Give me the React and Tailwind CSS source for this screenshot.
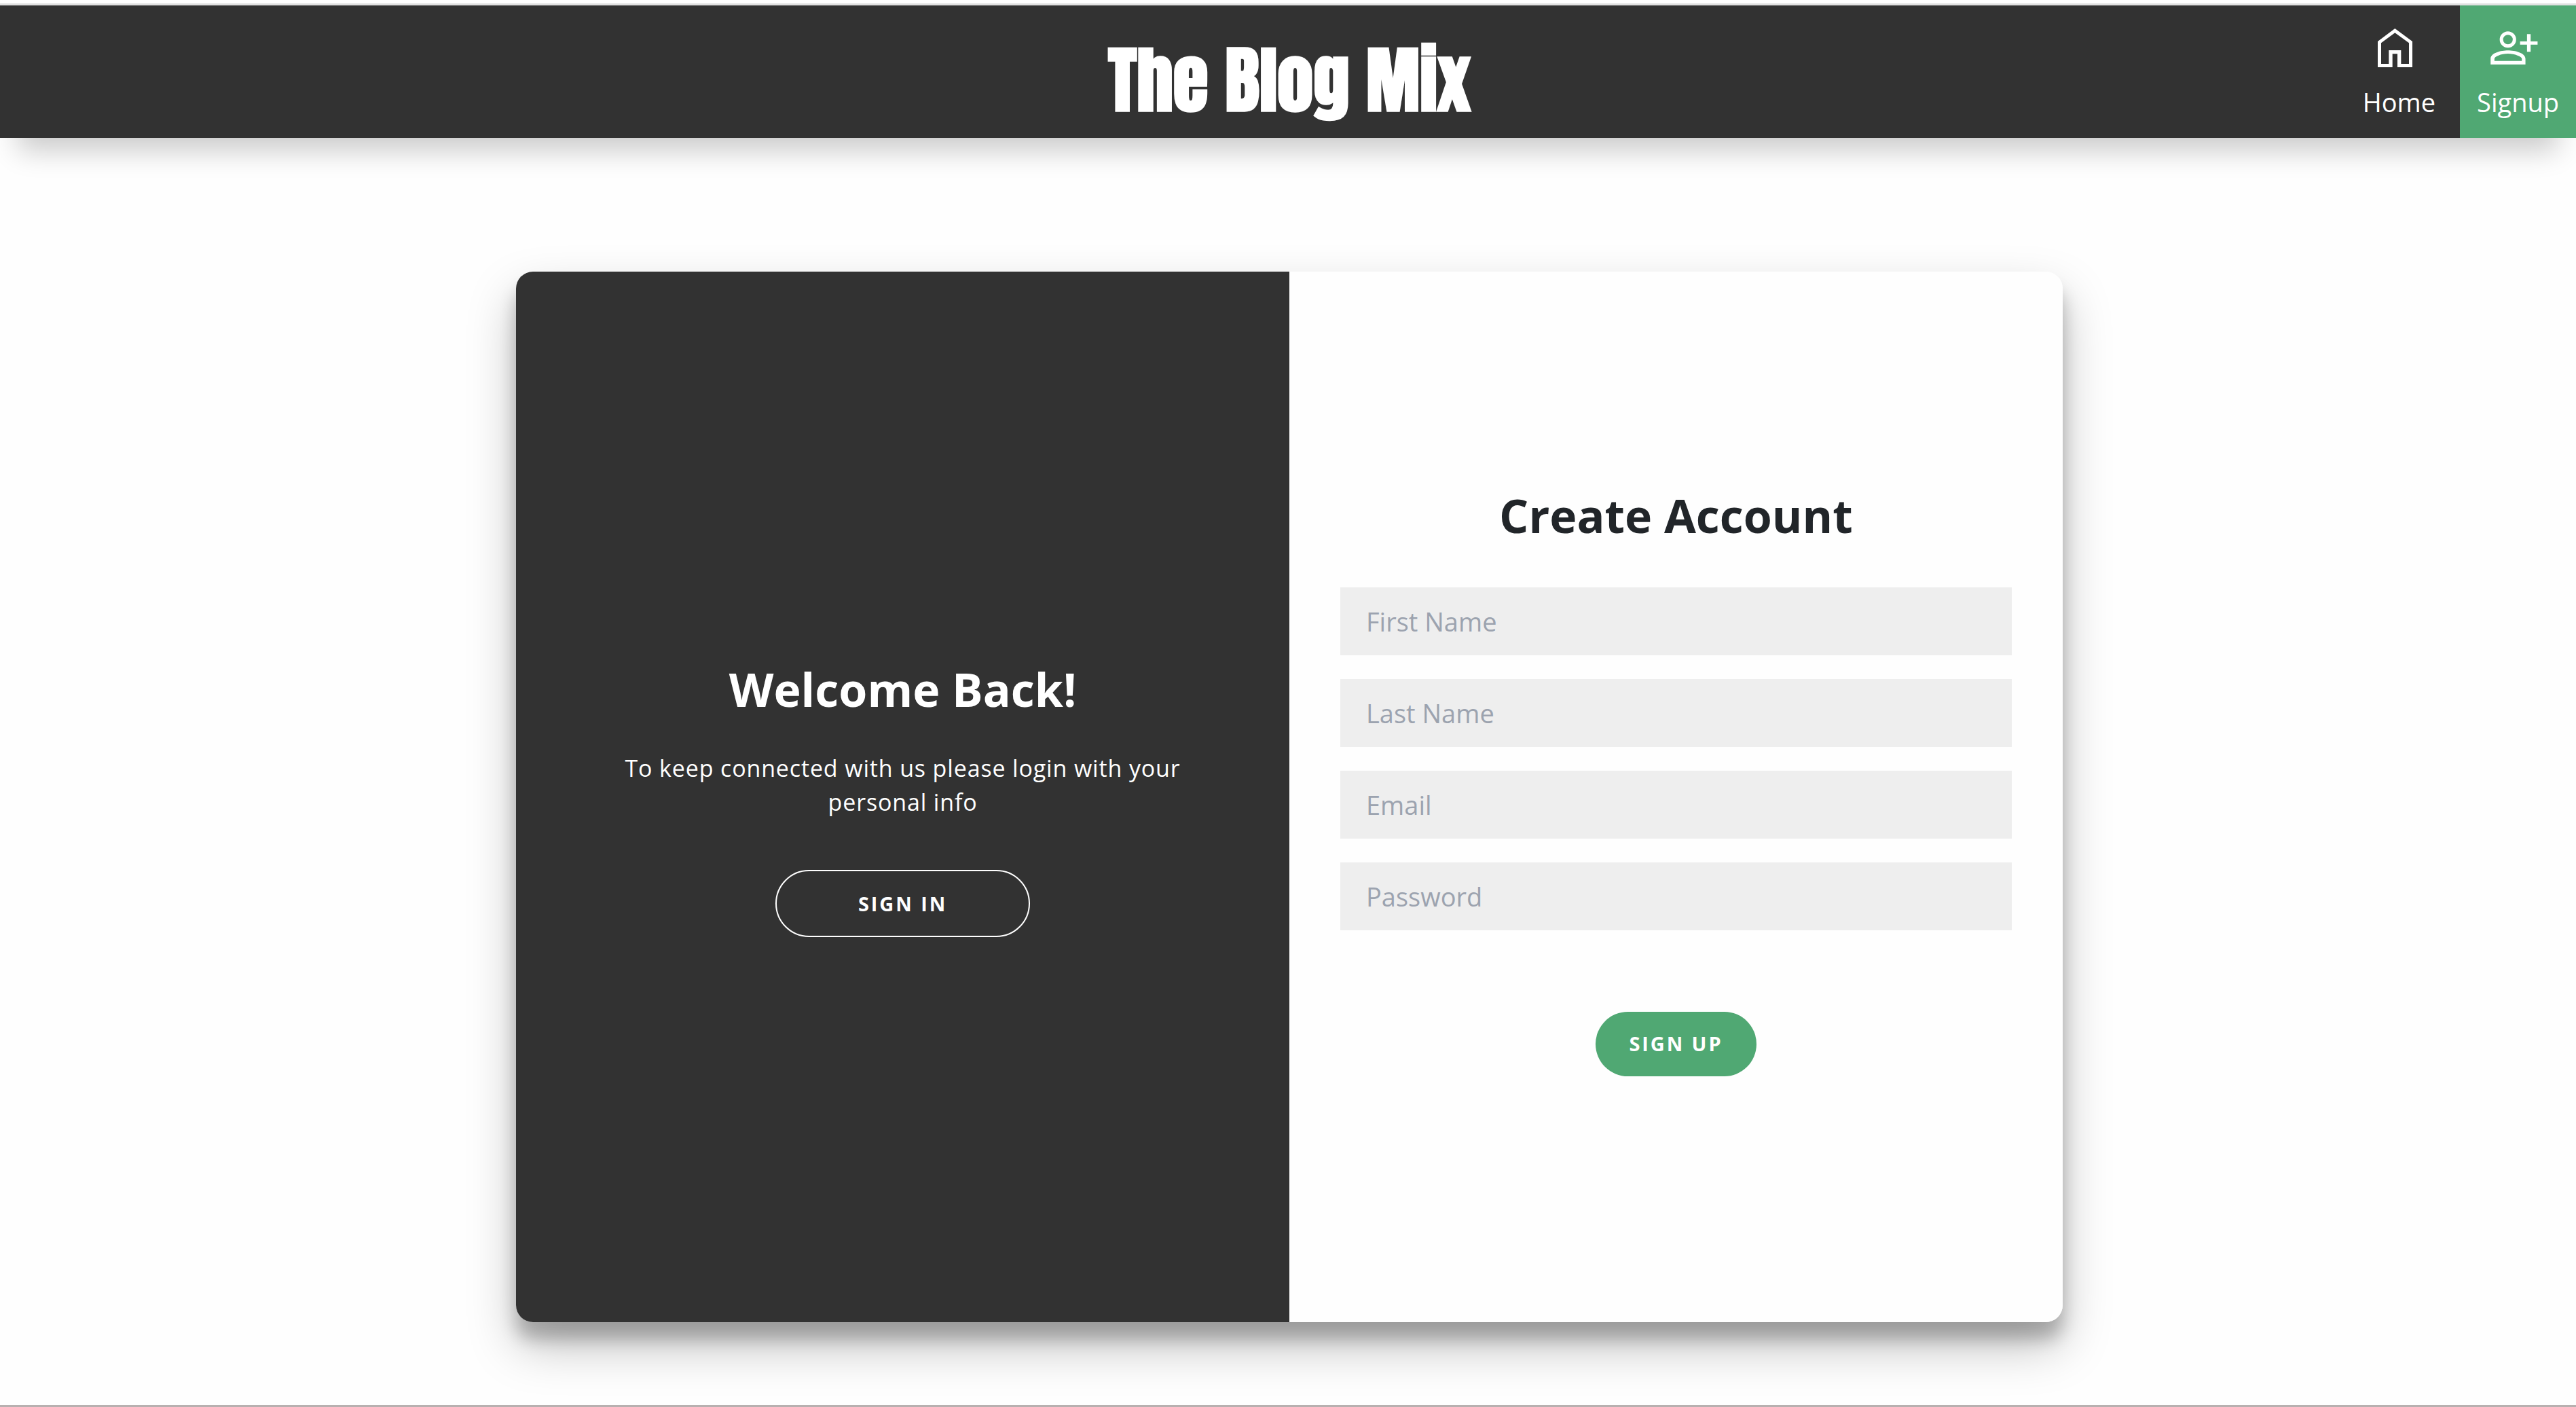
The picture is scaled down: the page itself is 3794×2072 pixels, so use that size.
import React from "react";

const fields = [
  { id: "first-name", label: "First Name", type: "text" },
  { id: "last-name", label: "Last Name", type: "text" },
  { id: "email", label: "Email", type: "email" },
  { id: "password", label: "Password", type: "password" },
];

function HomeIcon() {
  return (
    <svg viewBox="252 126 153 171" className="mr-3 h-[57px] w-[51px]" fill="currentColor" aria-hidden="true">
      <path
        fillRule="evenodd"
        d="M252 183 328 126 405 183V297H339V238H317V297H252ZM267 190V282H301V222H355V282H390V190L328 145Z"
      />
    </svg>
  );
}

function SignupIcon() {
  return (
    <svg viewBox="748 140 210 148" className="mr-3 h-[49px] w-[70px]" fill="currentColor" aria-hidden="true">
      <circle cx="825" cy="177" r="29" fill="none" stroke="currentColor" strokeWidth="15" />
      <path
        fillRule="evenodd"
        d="M748 288V262C748 236 794 225 825 225S903 236 903 262V288ZM765 272H887V262C887 254 856 240 825 240S765 254 765 262Z"
      />
      <path d="M910 153H926V185H957V200H926V231H910V200H879V185H910Z" />
    </svg>
  );
}

function Header() {
  return (
    <header className="relative grid grid-cols-[1fr_auto_1fr] bg-[#323232] pl-1 text-white shadow-[0_45px_38px_-26px_rgba(0,0,0,0.2)]">
      <h1 className="col-start-2 self-center pt-6 font-['Impact','Anton','Roboto_Condensed','Roboto',sans-serif] text-[106px] leading-[120px] font-black">
        The Blog Mix
      </h1>
      <nav className="flex justify-end text-[38px] leading-[54px]">
        <a href="#home" className="flex flex-col items-center px-9 pt-[34px] pb-[26px]">
          <HomeIcon />
          <span className="mt-auto">Home</span>
        </a>
        <a href="#signup" className="flex h-[195px] flex-col items-center bg-[#50a873] px-[25px] pt-[38px] pb-[26px]">
          <SignupIcon />
          <span className="mt-auto">Signup</span>
        </a>
      </nav>
    </header>
  );
}

function WelcomePanel() {
  return (
    <section className="flex w-1/2 flex-col items-center justify-center bg-[#323232] px-[100px] pt-1 text-center text-white">
      <h2 className="text-[68px] leading-[88px] font-bold">Welcome Back!</h2>
      <p className="mt-[47px] max-w-[880px] text-[34px] leading-[50px] tracking-wide">
        To keep connected with us please login with your personal info
      </p>
      <button
        type="button"
        className="mt-[75px] h-[99px] w-[375px] rounded-full border-2 border-white text-[29px] font-bold tracking-widest"
      >
        SIGN IN
      </button>
    </section>
  );
}

function SignupForm() {
  return (
    <form className="flex w-1/2 flex-col items-center justify-center bg-[#fefefe] px-[75px] pb-12">
      <h2 className="text-[68px] leading-[88px] font-bold text-[#212529]">Create Account</h2>
      <div className="mt-[62px] flex w-full flex-col gap-[35px]">
        {fields.map((f) => (
          <input
            key={f.id}
            id={f.id}
            type={f.type}
            aria-label={f.label}
            placeholder={f.label}
            className="h-[100px] w-full bg-[#eeeeee] px-[38px] text-[38px] text-[#212529] placeholder:text-[#9ca3af]"
          />
        ))}
      </div>
      <button
        type="submit"
        className="mt-[120px] h-[95px] rounded-full bg-[#50a873] px-[49px] text-[29px] font-bold tracking-widest text-white"
      >
        SIGN UP
      </button>
    </form>
  );
}

export default function App() {
  return (
    <div className="flex min-h-screen flex-col border-b-[3px] border-[#b8b0b0] bg-[#fefefe] font-['Segoe_UI','Open_Sans',sans-serif]">
      <div className="h-2 border-b-[3px] border-[#e0e0e0]" />
      <Header />
      <main className="flex flex-1 justify-center pt-[197px] pb-[122px] pl-1">
        <div className="flex w-[60.1%] overflow-hidden rounded-[25px] shadow-[0_35px_70px_rgba(0,0,0,0.25),0_25px_25px_rgba(0,0,0,0.22)]">
          <WelcomePanel />
          <SignupForm />
        </div>
      </main>
    </div>
  );
}
